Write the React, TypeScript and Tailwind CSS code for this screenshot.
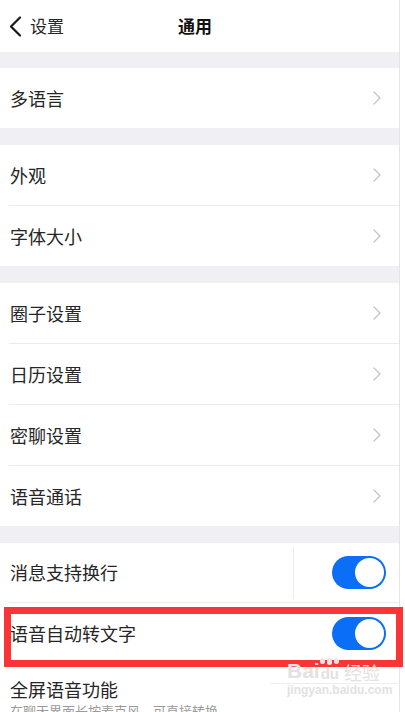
import { ReactNode } from 'react'

const font = { fontFamily: '"Noto Sans CJK SC", "Noto Sans", sans-serif' }
const latin = { fontFamily: '"Liberation Sans", Arial, sans-serif' }

function Chevron() {
  return (
    <svg width="8" height="14" viewBox="0 0 8 14" fill="none">
      <path d="M1 1l6 6-6 6" stroke="#c4c4c8" strokeWidth="1.3" strokeLinecap="round" strokeLinejoin="round" />
    </svg>
  )
}

function Toggle() {
  return (
    <div className="w-[54px] h-[33px] rounded-full bg-[#0b6ef7] flex items-center justify-end p-[2px]">
      <div className="w-[29px] h-[29px] rounded-full bg-white" />
    </div>
  )
}

function Band() {
  return <div className="h-[17px] bg-[#f0f0f4]" />
}

function Divider() {
  return <div className="h-px bg-[#ececec] ml-[9px]" />
}

function LinkRow({ label }: { label: string }) {
  return (
    <div className="h-[60px] flex items-center justify-between pl-[10px] pr-[18px]">
      <span className="text-[18px] text-[#262626]">{label}</span>
      <Chevron />
    </div>
  )
}

function Group({ items }: { items: string[] }) {
  const rows: ReactNode[] = []
  items.forEach((label, i) => {
    if (i > 0) rows.push(<Divider key={'d' + i} />)
    rows.push(<LinkRow key={label} label={label} />)
  })
  return <div className="bg-white">{rows}</div>
}

export default function App() {
  return (
    <div className="relative w-[405px] h-[712px] overflow-hidden bg-white" style={font}>
      <div className="w-[400px] min-h-full border-r border-[#e4e4e6]">
        {/* Header */}
        <div className="h-[52px] relative flex items-center bg-white">
          <div className="flex items-center pl-[9px] gap-[8px]">
            <svg width="13" height="21" viewBox="0 0 13 21" fill="none">
              <path d="M11 1.5L2 10.5l9 9" stroke="#1a1a1a" strokeWidth="2.2" strokeLinecap="round" strokeLinejoin="round" />
            </svg>
            <span className="text-[17px] text-[#262626]">设置</span>
          </div>
          <span className="absolute left-[178px] text-[17px] font-bold text-[#111]">通用</span>
        </div>

        <div className="h-[16px] bg-[#f0f0f4]" />
        <Group items={['多语言']} />
        <Band />
        <Group items={['外观', '字体大小']} />
        <Band />
        <Group items={['圈子设置', '日历设置', '密聊设置', '语音通话']} />
        <Band />

        {/* Toggle rows */}
        <div className="bg-white">
          <div className="h-[59px] flex items-center pl-[10px] pr-[13px]">
            <span className="flex-1 text-[18px] text-[#262626]">消息支持换行</span>
            <div className="w-px h-[52px] bg-[#f1e9ea] mr-[38px]" />
            <Toggle />
          </div>
          <Divider />
          <div className="relative h-[61px] flex items-center pl-[10px] pr-[13px]">
            <span className="flex-1 text-[18px] text-[#262626]">语音自动转文字</span>
            <Toggle />
            <div className="absolute left-[4px] top-[4px] w-[399px] h-[60px] border-[7px] border-[#fb3438]" />
          </div>
          <div className="relative pl-[10px] pt-[13px]">
            <div className="text-[18px] leading-[24px] text-[#262626]">全屏语音功能</div>
            <div className="text-[13px] leading-[18px] text-[#9a9a9a] mt-[1px]">在聊天界面长按麦克风，可直接转换</div>
            <div className="absolute left-[270px] top-[19px] w-[130px] h-px bg-[#eeeeee]" />
          </div>
        </div>
      </div>

      {/* watermark */}
      <div className="absolute left-[287px] top-[658px] flex flex-col items-start text-[#e2e2e2]">
        <div className="flex items-end leading-none">
          <span className="text-[21px] font-bold" style={latin}>Bai</span>
          <div className="relative flex flex-col items-center">
            <div className="flex gap-[2px] mb-[1px]">
              <span className="w-[5px] h-[6px] rounded-full bg-[#efe2e2]" />
              <span className="w-[5px] h-[7px] rounded-full bg-[#efe2e2]" />
              <span className="w-[5px] h-[6px] rounded-full bg-[#efe2e2]" />
            </div>
            <span className="text-[15px] font-bold px-[1px] border-b-0" style={latin}>du</span>
          </div>
          <span className="text-[18px] ml-[4px]">经验</span>
        </div>
        <span className="text-[12px] leading-[14px] mt-[2px] font-bold" style={latin}>jingyan.baidu.com</span>
      </div>
    </div>
  )
}
